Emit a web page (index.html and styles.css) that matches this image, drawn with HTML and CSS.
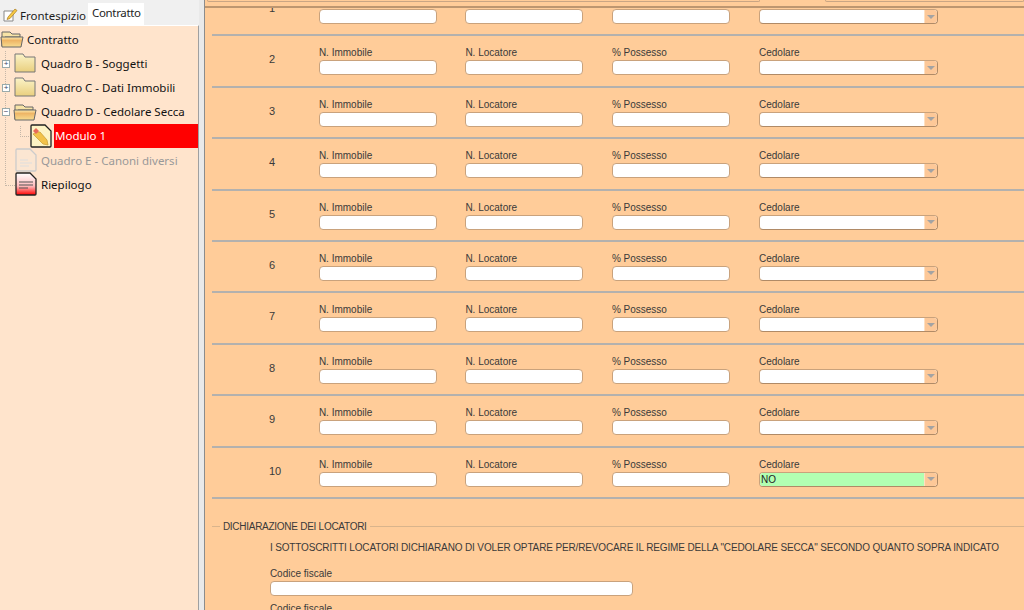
FILE: index.html
```html
<!DOCTYPE html>
<html lang="it">
<head>
<meta charset="utf-8">
<title>Contratto</title>
<link rel="stylesheet" href="styles.css">
</head>
<body>
<div class="app">
  <aside class="side">
    <div class="tabs">
      <div class="tab">
        <svg class="tab-ico" viewBox="0 0 16 16"><path d="M2 4h9v10H2z" fill="#fff" stroke="#888"/><path d="M6 10l7-8 2 1.500-7 8-3 1z" fill="#f6c945" stroke="#a87a20" stroke-width=".7"/></svg>
        <span>Frontespizio</span>
      </div>
      <div class="tab active">Contratto</div>
    </div>
    <div class="tree">
      <svg width="0" height="0" class="defs"><defs>
        <linearGradient id="fc" x1="0" y1="0" x2="0" y2="1"><stop offset="0" stop-color="#fbf3c8"/><stop offset="1" stop-color="#e9cf7e"/></linearGradient>
        <linearGradient id="fo" x1="0" y1="0" x2="0" y2="1"><stop offset="0" stop-color="#fdebb0"/><stop offset=".35" stop-color="#eeb566"/><stop offset="1" stop-color="#f8dc90"/></linearGradient>
        <linearGradient id="rg" x1="0" y1="0" x2="0" y2="1"><stop offset="0" stop-color="#fff"/><stop offset=".6" stop-color="#fbb"/><stop offset="1" stop-color="#f00"/></linearGradient>
      </defs></svg>
      <div class="guide g1"></div>
      <div class="guide g2"></div>
      <div class="node n0">
        <svg class="ico" viewBox="0 0 24 20"><path d="M2 17V3h8l2 2h8v3H5z" fill="#f7e3a6" stroke="#666"/><path d="M1 8h22l-2 10H2z" fill="url(#fo)" stroke="#666"/></svg>
        <span>Contratto</span>
      </div>
      <div class="node n1">
        <span class="exp">+</span>
        <svg class="ico" viewBox="0 0 24 20"><path d="M2 19V1h8l2 3h10v15z" fill="url(#fc)" stroke="#777"/></svg>
        <span>Quadro B - Soggetti</span>
      </div>
      <div class="node n1">
        <span class="exp">+</span>
        <svg class="ico" viewBox="0 0 24 20"><path d="M2 19V1h8l2 3h10v15z" fill="url(#fc)" stroke="#777"/></svg>
        <span>Quadro C - Dati Immobili</span>
      </div>
      <div class="node n1">
        <span class="exp">−</span>
        <svg class="ico" viewBox="0 0 24 20"><path d="M2 17V3h8l2 2h8v3H5z" fill="#f7e3a6" stroke="#666"/><path d="M1 8h22l-2 10H2z" fill="url(#fo)" stroke="#666"/></svg>
        <span>Quadro D - Cedolare Secca</span>
      </div>
      <div class="node n2">
        <svg class="ico doc" viewBox="0 0 22 24"><path d="M2 1h13l6 6v15a1 1 0 0 1-1 1H2a1 1 0 0 1-1-1V2a1 1 0 0 1 1-1z" fill="#fdf3c4" stroke="#222" stroke-width="1.300"/><path d="M7 8l-4 2 10 10 5 1-1-5-7-8z" fill="#f2c24a" stroke="#c49a30" stroke-width=".7"/><path d="M3 7l3-3 3 3-3 3z" fill="#e86a5a"/></svg>
        <span class="sel">Modulo 1</span>
      </div>
      <div class="node n1b off">
        <svg class="ico doc" viewBox="0 0 22 24"><path d="M2 1h13l6 6v15a1 1 0 0 1-1 1H2a1 1 0 0 1-1-1V2a1 1 0 0 1 1-1z" fill="#fbe6d2" stroke="#ccc" stroke-width="1.300"/><path d="M5 12h8M5 15h12M5 18h9" stroke="#ddd" stroke-width="1.200"/></svg>
        <span>Quadro E - Canoni diversi</span>
      </div>
      <div class="node n1b">
        <svg class="ico doc" viewBox="0 0 22 24"><path d="M2 1h13l6 6v15a1 1 0 0 1-1 1H2a1 1 0 0 1-1-1V2a1 1 0 0 1 1-1z" fill="url(#rg)" stroke="#222" stroke-width="1.300"/><path d="M4 10h14M4 13h14M4 16h9" stroke="#555" stroke-width="1.200"/></svg>
        <span>Riepilogo</span>
      </div>
    </div>
  </aside>
  <div class="split"></div>
  <main class="main">
    <div class="topstrip"><div class="tb wide"></div><div class="tb rest"></div></div>
    <div class="scroller">
      <div class="content">
        <section class="row"><div class="num">1</div><div class="fld"><label>N. Immobile</label><div class="in"></div></div><div class="fld"><label>N. Locatore</label><div class="in"></div></div><div class="fld"><label>% Possesso</label><div class="in"></div></div><div class="fld sel-f"><label>Cedolare</label><div class="combo"><div class="val"></div><div class="arrow"><i></i></div></div></div></section>
        <section class="row"><div class="num">2</div><div class="fld"><label>N. Immobile</label><div class="in"></div></div><div class="fld"><label>N. Locatore</label><div class="in"></div></div><div class="fld"><label>% Possesso</label><div class="in"></div></div><div class="fld sel-f"><label>Cedolare</label><div class="combo"><div class="val"></div><div class="arrow"><i></i></div></div></div></section>
        <section class="row"><div class="num">3</div><div class="fld"><label>N. Immobile</label><div class="in"></div></div><div class="fld"><label>N. Locatore</label><div class="in"></div></div><div class="fld"><label>% Possesso</label><div class="in"></div></div><div class="fld sel-f"><label>Cedolare</label><div class="combo"><div class="val"></div><div class="arrow"><i></i></div></div></div></section>
        <section class="row"><div class="num">4</div><div class="fld"><label>N. Immobile</label><div class="in"></div></div><div class="fld"><label>N. Locatore</label><div class="in"></div></div><div class="fld"><label>% Possesso</label><div class="in"></div></div><div class="fld sel-f"><label>Cedolare</label><div class="combo"><div class="val"></div><div class="arrow"><i></i></div></div></div></section>
        <section class="row"><div class="num">5</div><div class="fld"><label>N. Immobile</label><div class="in"></div></div><div class="fld"><label>N. Locatore</label><div class="in"></div></div><div class="fld"><label>% Possesso</label><div class="in"></div></div><div class="fld sel-f"><label>Cedolare</label><div class="combo"><div class="val"></div><div class="arrow"><i></i></div></div></div></section>
        <section class="row"><div class="num">6</div><div class="fld"><label>N. Immobile</label><div class="in"></div></div><div class="fld"><label>N. Locatore</label><div class="in"></div></div><div class="fld"><label>% Possesso</label><div class="in"></div></div><div class="fld sel-f"><label>Cedolare</label><div class="combo"><div class="val"></div><div class="arrow"><i></i></div></div></div></section>
        <section class="row"><div class="num">7</div><div class="fld"><label>N. Immobile</label><div class="in"></div></div><div class="fld"><label>N. Locatore</label><div class="in"></div></div><div class="fld"><label>% Possesso</label><div class="in"></div></div><div class="fld sel-f"><label>Cedolare</label><div class="combo"><div class="val"></div><div class="arrow"><i></i></div></div></div></section>
        <section class="row"><div class="num">8</div><div class="fld"><label>N. Immobile</label><div class="in"></div></div><div class="fld"><label>N. Locatore</label><div class="in"></div></div><div class="fld"><label>% Possesso</label><div class="in"></div></div><div class="fld sel-f"><label>Cedolare</label><div class="combo"><div class="val"></div><div class="arrow"><i></i></div></div></div></section>
        <section class="row"><div class="num">9</div><div class="fld"><label>N. Immobile</label><div class="in"></div></div><div class="fld"><label>N. Locatore</label><div class="in"></div></div><div class="fld"><label>% Possesso</label><div class="in"></div></div><div class="fld sel-f"><label>Cedolare</label><div class="combo"><div class="val"></div><div class="arrow"><i></i></div></div></div></section>
        <section class="row"><div class="num">10</div><div class="fld"><label>N. Immobile</label><div class="in"></div></div><div class="fld"><label>N. Locatore</label><div class="in"></div></div><div class="fld"><label>% Possesso</label><div class="in"></div></div><div class="fld sel-f"><label>Cedolare</label><div class="combo green"><div class="val">NO</div><div class="arrow"><i></i></div></div></div></section>
        <fieldset class="decl">
          <legend>DICHIARAZIONE DEI LOCATORI</legend>
          <p class="note">I SOTTOSCRITTI LOCATORI DICHIARANO DI VOLER OPTARE PER/REVOCARE IL REGIME DELLA "CEDOLARE SECCA" SECONDO QUANTO SOPRA INDICATO</p>
          <div class="cf"><label>Codice fiscale</label><div class="in long"></div></div>
          <div class="cf"><label>Codice fiscale</label><div class="in long"></div></div>
        </fieldset>
      </div>
    </div>
  </main>
</div>
</body>
</html>
```
FILE: styles.css
```css
* { box-sizing: border-box; }
html, body { margin: 0; height: 100%; overflow: hidden; }
body { font-family: "Liberation Sans", Arial, sans-serif; background: #f0f0f0; color: #333; }
.app { display: flex; width: 1024px; height: 610px; }

.side { width: 199px; flex: none; display: flex; flex-direction: column; background: #f0f0f0; padding-top: 3px; }
.tabs { display: flex; height: 22px; align-items: flex-end; padding-left: 1px; font-family: "Noto Sans", sans-serif; font-size: 11.500px; color: #1c1c1c; }
.tab { height: 20px; display: flex; align-items: center; padding: 0 2px 0 1px; gap: 2px; background: #f0f0f0; }
.tab.active { width: 56px; height: 22px; background: #fff; padding: 0 0 3px 4px; letter-spacing: -.35px; white-space: nowrap; }
.tab-ico { width: 16px; height: 16px; }
.tree { position: relative; flex: 1; background: #ffe4cc; border-top: 1px solid #fff; border-right: 1px solid #a0a0a0; font-family: "Noto Sans", sans-serif; font-size: 11.500px; color: #111; padding-top: 1px; }
.defs { position: absolute; }
.node { height: 24.200px; display: flex; align-items: center; position: relative; white-space: nowrap; }
.ico { width: 24px; height: 20px; flex: none; }
.ico.doc { width: 22px; height: 24px; }
.n0 { padding-left: 0; gap: 3px; }
.n1 { padding-left: 2px; }
.n1 > span:last-child { margin-left: 4px; }
.n1 .ico { margin-left: 3px; }
.exp { width: 8px; height: 8px; margin-top: 1px; border: 1px solid #9aa; background: #fff; color: #446; font-family: "Liberation Sans", sans-serif; font-size: 8px; line-height: 6px; text-align: center; flex: none; }
.n2 { padding-left: 30px; }
.n2 .sel { display: block; width: 144px; height: 24px; line-height: 24px; background: #f00; color: #fff; padding-left: 1px; margin-left: 2px; }
.n1b { padding-left: 15px; }
.n1b > span { margin-left: 4px; }
.off { color: #999; }
.guide { position: absolute; border-left: 1px dotted #c4b6a8; border-bottom: 1px dotted #c4b6a8; }
.g1 { left: 5px; top: 25px; height: 135px; width: 10px; }
.g2 { left: 20px; top: 100px; height: 11px; width: 9px; }

.split { width: 6px; flex: none; background: #e9e9e9; border-right: 1px solid #8c8c8c; }
.main { flex: 1; min-width: 0; display: flex; flex-direction: column; background: #fc9; }
.topstrip { height: 8px; flex: none; display: flex; gap: 65px; border-bottom: 2px solid #bd9670; padding-left: 2px; }
.tb { height: 2px; border: 1px solid #c9a584; border-top: 0; border-radius: 0 0 3px 3px; }
.wide { width: 553px; }
.rest { flex: 1; }
.scroller { flex: 1; overflow: hidden; position: relative; }
.content { margin-top: -23px; padding-left: 6.900px; }

.row { height: 51.400px; display: flex; align-items: flex-start; border-bottom: 2px solid #b3b1ae; padding-top: 11px; font-size: 10px; color: #3a3a3a; }
.num { width: 107px; padding: 6px 0 0 57px; font-size: 11px; }
.fld { width: 146.500px; flex: none; }
.fld label, .cf label { display: block; height: 12px; line-height: 12px; }
.in { width: 118px; height: 15px; margin-top: 1px; background: #fff; border: 1px solid #c9a27c; border-radius: 4px; }
.sel-f { width: 180px; margin-left: .6px; }
.combo { width: 179px; height: 15px; margin-top: 1px; display: flex; border: 1px solid #c9a27c; border-right-color: #b08a66; border-bottom-color: #b08a66; border-radius: 4px; background: #fff; overflow: hidden; }
.val { flex: 1; padding-left: 1px; line-height: 13px; font-size: 10px; color: #222; }
.green .val { background: #b2ffb2; }
.arrow { width: 13px; background: #fdc898; border-left: 1px solid #ffe0c0; display: flex; align-items: center; justify-content: center; }
.arrow i { width: 0; height: 0; border-left: 4px solid transparent; border-right: 4px solid transparent; border-top: 4px solid #a3a3a3; }

.decl { margin: 22px 0 0; padding: 0 0 0 58px; border: 0; border-top: 1px solid #d9b48c; font-size: 10px; color: #3a3a3a; min-width: 0; }
.decl legend { margin-left: -50px; padding: 0 3px; line-height: 12px; letter-spacing: -.27px; }
.note { margin: 9px 0 0; line-height: 12px; white-space: nowrap; letter-spacing: -.14px; }
.cf { margin-top: 14px; }
.cf + .cf { margin-top: 7px; }
.in.long { width: 363px; }
```
